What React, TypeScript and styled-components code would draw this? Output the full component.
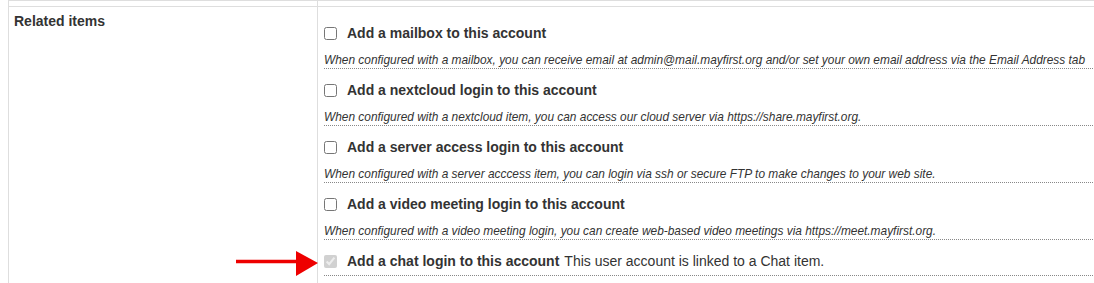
import React from "react";
import styled, { createGlobalStyle } from "styled-components";

const Global = createGlobalStyle`
  html, body { margin: 0; padding: 0; background: #fff; overflow: hidden; }
  body { padding-left: 8px; font-family: "Liberation Sans", Arial, sans-serif; color: #333; }
`;

const Wrap = styled.div`
  position: relative;
  width: 1120px;
`;

const Table = styled.table`
  border-collapse: collapse;
  width: 1120px;
  table-layout: fixed;
`;

const Row = styled.tr``;

const LabelCell = styled.th<{ $h?: number }>`
  width: 308px;
  border: 1px solid #dedede;
  text-align: left;
  vertical-align: top;
  padding: 5px 5px;
  font-size: 14px;
  line-height: 18px;
  font-weight: bold;
  color: #333;
  height: ${(p) => (p.$h !== undefined ? `${p.$h}px` : "auto")};
  ${(p) => (p.$h !== undefined ? "padding: 0;" : "")}
`;

const ValueCell = styled.td<{ $h?: number }>`
  border: 1px solid #dedede;
  vertical-align: top;
  padding: 5px 6px 8px 6px;
  height: ${(p) => (p.$h !== undefined ? `${p.$h}px` : "auto")};
  ${(p) => (p.$h !== undefined ? "padding: 0;" : "")}
`;

const Item = styled.div`
  margin-top: 11px;
`;

const CheckLine = styled.label<{ $dotted?: boolean }>`
  display: flex;
  align-items: center;
  height: 20px;
  font-size: 14px;
  line-height: 20px;
  color: #333;
  white-space: nowrap;
  ${(p) =>
    p.$dotted
      ? "border-bottom: 1px dotted #888; padding-bottom: 4px; height: 20px; box-sizing: content-box;"
      : ""}
`;

const Box = styled.input`
  width: 13px;
  height: 13px;
  margin: 0 10px 0 0;
  flex: none;
`;

const Strong = styled.span`
  font-weight: bold;
`;

const Extra = styled.span`
  margin-left: 5px;
`;

const Desc = styled.div`
  margin-top: 9px;
  font-size: 11.9px;
  line-height: 16px;
  font-style: italic;
  color: #333;
  white-space: nowrap;
  border-bottom: 1px dotted #888;
`;

const Arrow = styled.svg`
  position: absolute;
  left: 228px;
  top: 250px;
`;

const items = [
  {
    title: "Add a mailbox to this account",
    desc: "When configured with a mailbox, you can receive email at admin@mail.mayfirst.org and/or set your own email address via the Email Address tab",
  },
  {
    title: "Add a nextcloud login to this account",
    desc: "When configured with a nextcloud item, you can access our cloud server via https://share.mayfirst.org.",
  },
  {
    title: "Add a server access login to this account",
    desc: "When configured with a server acccess item, you can login via ssh or secure FTP to make changes to your web site.",
  },
  {
    title: "Add a video meeting login to this account",
    desc: "When configured with a video meeting login, you can create web-based video meetings via https://meet.mayfirst.org.",
  },
];

export default function App() {
  return (
    <>
      <Global />
      <Wrap>
        <Table>
          <tbody>
            <Row>
              <LabelCell $h={5} />
              <ValueCell $h={5} />
            </Row>
            <Row>
              <LabelCell>Related items</LabelCell>
              <ValueCell>
                {items.map((it) => (
                  <Item key={it.title}>
                    <CheckLine>
                      <Box type="checkbox" />
                      <Strong>{it.title}</Strong>
                    </CheckLine>
                    <Desc>{it.desc}</Desc>
                  </Item>
                ))}
                <Item>
                  <CheckLine $dotted>
                    <Box type="checkbox" checked disabled readOnly />
                    <Strong>Add a chat login to this account</Strong>
                    <Extra>This user account is linked to a Chat item.</Extra>
                  </CheckLine>
                </Item>
              </ValueCell>
            </Row>
          </tbody>
        </Table>
        <Arrow width="90" height="30" viewBox="0 0 90 30">
          <line x1="0" y1="11.5" x2="62" y2="11.5" stroke="#ee0000" strokeWidth="3.5" />
          <polygon points="60,1 82,13 60,26" fill="#ee0000" />
        </Arrow>
      </Wrap>
    </>
  );
}
